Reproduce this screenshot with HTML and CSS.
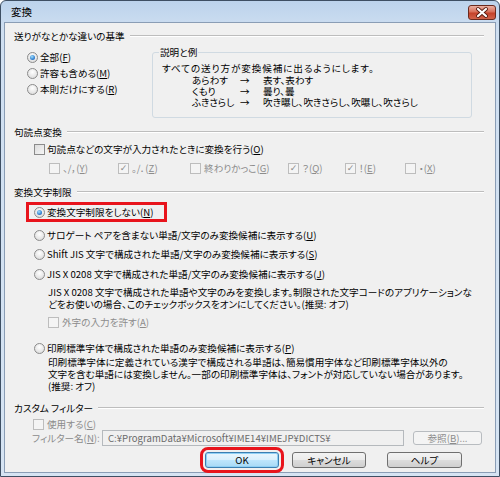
FILE: index.html
```html
<!DOCTYPE html>
<html lang="ja">
<head>
<meta charset="utf-8">
<title>変換</title>
<link rel="stylesheet" href="styles.css">
</head>
<body>
<div class="window">
  <div class="titlebar">
    <span class="title">変換</span>
    <span class="close">
      <svg width="28" height="15" viewBox="0 0 28 15">
        <path d="M10 4 L18 11 M18 4 L10 11" stroke="#5a1d12" stroke-width="4" stroke-linecap="round"/>
        <path d="M10 4 L18 11 M18 4 L10 11" stroke="#ffffff" stroke-width="2.2" stroke-linecap="round"/>
      </svg>
    </span>
  </div>
  <div class="client">
    <div class="group-head"><span>送りがなとかな違いの基準</span><i class="rule"></i></div>
    <div class="okuri">
      <div class="okuri-opts">
        <label class="opt"><span class="radio on"></span>全部(<u>F</u>)</label>
        <label class="opt"><span class="radio"></span>許容も含める(<u>M</u>)</label>
        <label class="opt"><span class="radio"></span>本則だけにする(<u>R</u>)</label>
      </div>
      <fieldset class="example">
        <legend>説明と例</legend>
        <p class="ex-lead">すべての送り方が変換候補に出るようにします。</p>
        <div class="ex-grid">
          <span>あらわす</span><span>→</span><span>表す、表わす</span>
          <span>くもり</span><span>→</span><span>曇り、曇</span>
          <span>ふきさらし</span><span>→</span><span>吹き曝し、吹きさらし、吹曝し、吹さらし</span>
        </div>
      </fieldset>
    </div>

    <div class="group-head s2"><span>句読点変換</span><i class="rule"></i></div>
    <label class="row chk-o"><span class="check"></span>句読点などの文字が入力されたときに変換を行う(<u>O</u>)</label>
    <div class="row punct">
      <label class="pitem w69 dis"><span class="check dis"></span>、/，(<u>Y</u>)</label>
      <label class="pitem w72 dis"><span class="check dis on">✓</span>。/．(<u>Z</u>)</label>
      <label class="pitem w98 dis"><span class="check dis"></span>終わりかっこ(<u>G</u>)</label>
      <label class="pitem w57 dis"><span class="check dis on">✓</span>？(<u>Q</u>)</label>
      <label class="pitem w60 dis"><span class="check dis on">✓</span>！(<u>E</u>)</label>
      <label class="pitem dis"><span class="check dis"></span>・(<u>X</u>)</label>
    </div>

    <div class="group-head s3"><span>変換文字制限</span><i class="rule"></i></div>
    <div class="row r-n"><label class="opt3 marked"><span class="radio on"></span>変換文字制限をしない(<u>N</u>)</label></div>
    <div class="row r-u"><label class="opt3"><span class="radio"></span>サロゲート ペアを含まない単語/文字のみ変換候補に表示する(<u>U</u>)</label></div>
    <div class="row r-s"><label class="opt3"><span class="radio"></span>Shift JIS 文字で構成された単語/文字のみ変換候補に表示する(<u>S</u>)</label></div>
    <div class="row r-j"><label class="opt3"><span class="radio"></span>JIS X 0208 文字で構成された単語/文字のみ変換候補に表示する(<u>J</u>)</label></div>
    <p class="desc d-j">JIS X 0208 文字で構成された単語や文字のみを変換します。制限された文字コードのアプリケーションな<br>どをお使いの場合、このチェックボックスをオンにしてください。(推奨: オフ)</p>
    <label class="row gaiji dis"><span class="check dis"></span>外字の入力を許す(<u>A</u>)</label>
    <div class="row r-p"><label class="opt3"><span class="radio"></span>印刷標準字体で構成された単語のみ変換候補に表示する(<u>P</u>)</label></div>
    <p class="desc d-p">印刷標準字体に定義されている漢字で構成される単語は、簡易慣用字体など印刷標準字体以外の<br>文字を含む単語には変換しません。一部の印刷標準字体は、フォントが対応していない場合があります。<br>(推奨: オフ)</p>

    <div class="group-head s4"><span>カスタム フィルター</span><i class="rule"></i></div>
    <label class="row use dis"><span class="check dis"></span>使用する(<u>C</u>)</label>
    <div class="filter">
      <span class="flabel dis">フィルター名(<u>N</u>):</span>
      <span class="finput">C:¥ProgramData¥Microsoft¥IME14¥IMEJP¥DICTS¥</span>
      <span class="btn small dis">参照(<u>B</u>)...</span>
    </div>
    <div class="buttons">
      <span class="btn main ok">OK</span>
      <span class="btn main cancel">キャンセル</span>
      <span class="btn main help">ヘルプ</span>
    </div>
  </div>
</div>
</body>
</html>
```

FILE: styles.css
```css
* { box-sizing: border-box; }
html, body { margin: 0; padding: 0; background: #ffffff; }
body {
  font-family: "Noto Sans CJK JP", "Noto Sans", sans-serif;
  font-size: 9.6px;
  color: #000;
  font-feature-settings: "palt";
}
u { text-decoration: underline; text-underline-offset: 1px; }

.window {
  width: 500px;
  height: 477px;
  border: 1px solid #3e4f63;
  border-radius: 6px 6px 0 0;
  background: linear-gradient(#bcd3ec, #cfdff1 30px, #d6e4f3);
  padding: 0 3px 3px 3px;
  display: flex;
  flex-direction: column;
}
.titlebar {
  height: 21px;
  display: flex;
  align-items: center;
  padding-left: 7px;
}
.title { font-size: 10.5px; line-height: 14px; flex: 1; }
.close {
  width: 28px;
  height: 15px;
  margin-top: 4px;
  align-self: flex-start;
  border: 1px solid #6b2a1e;
  border-radius: 3px;
  background: linear-gradient(#eab0a3, #d86f59 45%, #c4422a 55%, #d2634a);
  display: flex;
  align-items: center;
  justify-content: center;
  overflow: hidden;
}
.close svg { display: block; flex: none; }

.client {
  flex: 1;
  border: 1px solid #8a9db5;
  background: #f0f0f0;
  padding-top: 6px;
  display: flex;
  flex-direction: column;
}

.group-head {
  height: 14px;
  line-height: 14px;
  display: flex;
  align-items: center;
  padding-left: 9px;
  padding-right: 11px;
  white-space: nowrap;
}
.group-head .rule {
  flex: 1;
  margin-left: 5px;
  height: 2px;
  border-top: 1px solid #bdbdbd;
  border-bottom: 1px solid #ffffff;
}
.s2 { margin-top: 7px; }
.s3 { margin-top: 10px; }
.s4 { margin-top: 9px; }

.okuri { display: flex; align-items: flex-start; }
.okuri-opts {
  width: 147px;
  padding-left: 22px;
  margin-top: 6px;
  display: flex;
  flex-direction: column;
}
.opt {
  height: 16px;
  display: flex;
  align-items: center;
  white-space: nowrap;
}
.radio {
  flex: none;
  width: 11px;
  height: 11px;
  border-radius: 50%;
  border: 1px solid #8b8b8b;
  background: radial-gradient(circle at 50% 35%, #ffffff, #e2e2e2 70%, #d0d0d0);
  margin-right: 2px;
  position: relative;
}
.radio.on::after {
  content: "";
  position: absolute;
  left: 2px; top: 2px; right: 2px; bottom: 2px;
  border-radius: 50%;
  background: radial-gradient(circle at 40% 35%, #a4e0fb, #3b8ad6 55%, #14439c);
}

.example {
  margin: 3px 0 0 0;
  width: 320px;
  border: 1px solid #d0dae2;
  border-radius: 3px;
  padding: 0 8px 9px 9px;
  min-width: 0;
}
.example legend {
  padding: 0 1px;
  margin-left: -3px;
  line-height: 12px;
}
.ex-lead {
  margin: 4px 0 0 0;
  line-height: 12px;
  white-space: nowrap;
  letter-spacing: 0.9px;
}
.ex-grid {
  margin-top: 1px;
  padding-left: 30px;
  display: grid;
  grid-template-columns: 48px 23px auto;
  line-height: 11px;
  white-space: nowrap;
}

.row {
  height: 14px;
  line-height: 14px;
  display: flex;
  align-items: center;
  white-space: nowrap;
}
.check {
  flex: none;
  width: 11px;
  height: 11px;
  border: 1px solid #8b8b8b;
  background: linear-gradient(135deg, #dcdcdc, #f6f6f6);
  margin-right: 2px;
  display: flex;
  align-items: center;
  justify-content: center;
  font-size: 9px;
  line-height: 9px;
  color: #a0a0a0;
  font-family: "DejaVu Sans", sans-serif;
}
.check.dis { border-color: #bdbdbd; background: #f4f4f4; }
.dis { color: #8c8c8c; }

.chk-o { margin-top: 3px; padding-left: 29px; }
.punct { margin-top: 5px; padding-left: 44px; }
.pitem { display: flex; align-items: center; flex: none; }
.pitem .check { margin-right: 3px; }
.w69 { width: 69px; }
.w72 { width: 72px; }
.w98 { width: 98px; }
.w57 { width: 57px; }
.w60 { width: 60px; }

.opt3 { display: flex; align-items: center; height: 14px; }
.r-n { margin-top: 6px; padding-left: 24px; }
.r-n .opt3 { padding-left: 5px; width: 135px; }
.marked { outline: 3px solid #e8141c; }
.r-u { margin-top: 9px; padding-left: 29px; }
.r-s { margin-top: 5px; padding-left: 29px; }
.r-j { margin-top: 6px; padding-left: 29px; }
.r-p { margin-top: 12px; padding-left: 29px; }

.desc {
  margin: 0;
  padding-left: 43px;
  line-height: 12px;
  white-space: nowrap;
}
.d-j { margin-top: 5px; }
.d-p { margin-top: 1px; }
.gaiji { margin-top: 5px; padding-left: 43px; }
.gaiji .check { margin-right: 3px; }

.use { margin-top: 3px; height: 12px; line-height: 12px; padding-left: 28px; }
.use .check { margin-right: 3px; }
.filter {
  height: 16px;
  display: flex;
  align-items: center;
  white-space: nowrap;
}
.flabel { width: 97px; padding-left: 27px; flex: none; }
.finput {
  width: 302px;
  height: 16px;
  flex: none;
  border: 1px solid #b5b9bd;
  background: #f0f0f0;
  color: #6a6a6a;
  padding-left: 5px;
  line-height: 14px;
}
.btn {
  display: flex;
  align-items: center;
  justify-content: center;
  flex: none;
  border-radius: 3px;
  white-space: nowrap;
}
.small {
  width: 69px;
  height: 14px;
  margin-left: 9px;
  border: 1px solid #b8bcc0;
  background: #f4f4f4;
  color: #8c8c8c;
}
.buttons {
  margin-top: 6px;
  height: 16px;
  display: flex;
  padding-left: 200px;
}
.main {
  height: 16px;
  border: 1px solid #707070;
  background: linear-gradient(#f3f3f3, #ebebeb 50%, #dddddd 50%, #cfcfcf);
}
.ok {
  width: 74px;
  border-color: #3c7fb1;
  background: linear-gradient(#eaf6fd, #d9f0fc 50%, #bee6fd 50%, #a7d9f5);
  box-shadow: inset 0 0 0 1px #8fd0f5;
  outline: 3px solid #e8141c;
  outline-offset: 2px;
}
.cancel { width: 74px; margin-left: 13px; }
.help { width: 75px; margin-left: 21px; }
```
